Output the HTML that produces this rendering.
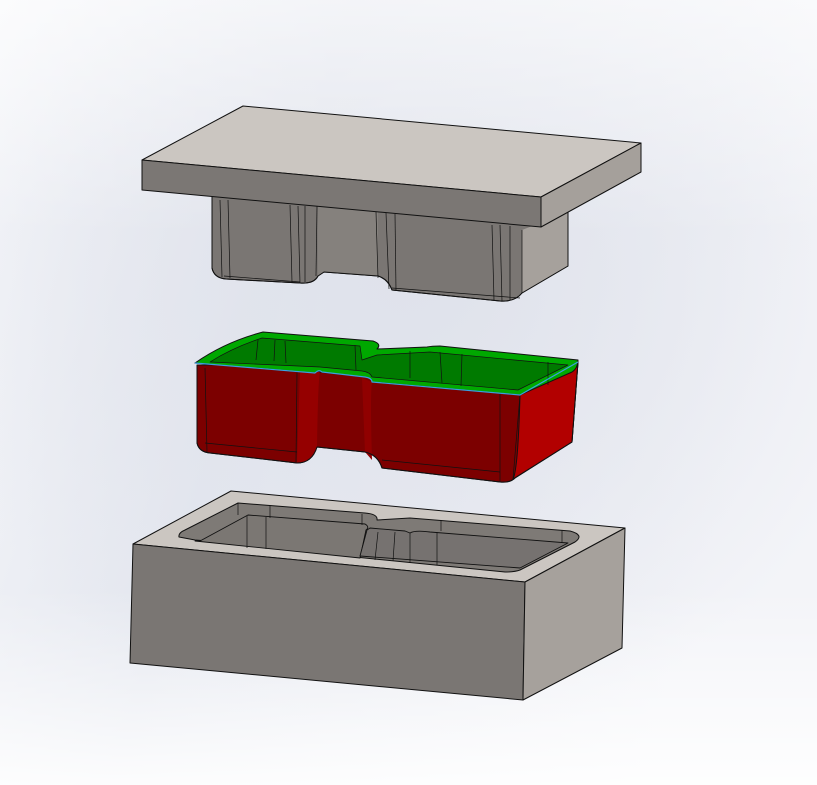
<!DOCTYPE html>
<html><head><meta charset="utf-8"><style>
html,body{margin:0;padding:0;width:817px;height:785px;overflow:hidden}
</style></head><body>
<svg width="817" height="785" viewBox="0 0 817 785" xmlns="http://www.w3.org/2000/svg">
<defs>
<linearGradient id="bg" x1="0" y1="0" x2="1" y2="0.3">
<stop offset="0" stop-color="#f6f7fa"/><stop offset="0.4" stop-color="#e4e7ef"/><stop offset="1" stop-color="#f3f4f8"/>
</linearGradient>
<radialGradient id="bg2" cx="0.5" cy="0.35" r="0.6"><stop offset="0" stop-color="#dfe2eb"/><stop offset="1" stop-color="#dfe2eb" stop-opacity="0"/></radialGradient>
<linearGradient id="bg3" x1="0" y1="0" x2="0" y2="1"><stop offset="0" stop-color="#fff" stop-opacity="0.6"/><stop offset="0.3" stop-color="#fff" stop-opacity="0"/><stop offset="0.75" stop-color="#fff" stop-opacity="0"/><stop offset="1" stop-color="#fff" stop-opacity="0.9"/></linearGradient>
</defs>
<rect width="817" height="785" fill="url(#bg)"/>
<rect width="817" height="785" fill="url(#bg2)"/>
<rect width="817" height="785" fill="url(#bg3)"/>

<g stroke="#111" stroke-width="1" stroke-linejoin="round">
<path d="M212,195 L212,268 Q214,278 226,279 L300,283 Q314,284 318,276 L324,272 L378,276 Q388,279 392,290 L500,301 Q515,302 522,293 L568,266 L568,212 Z" fill="#7a7673"/>
<path d="M522,230 L568,212 L568,266 L522,293 Z" fill="#a6a19c" stroke="none"/>
<path d="M318,205 L318,276 L324,272 L378,276 L378,210 Z" fill="#85817d" stroke="none"/>
<path d="M212,195 L212,268 Q214,278 226,279 L300,283 Q314,284 318,276 L324,272 L378,276 Q388,279 392,290 L500,301 Q515,302 522,293 L568,266 L568,212" fill="none"/>
<g stroke-width="0.7" fill="none">
<line x1="220" y1="200" x2="222" y2="277"/><line x1="228" y1="200" x2="230" y2="278"/>
<line x1="290" y1="205" x2="292" y2="282"/><line x1="298" y1="206" x2="300" y2="283"/><line x1="305" y1="206" x2="305" y2="282"/>
<line x1="317" y1="206" x2="316" y2="276"/><line x1="376" y1="212" x2="378" y2="278"/><line x1="386" y1="213" x2="389" y2="289"/>
<line x1="395" y1="214" x2="396" y2="290"/><line x1="492" y1="225" x2="494" y2="300"/><line x1="500" y1="225" x2="502" y2="301"/><line x1="510" y1="226" x2="510" y2="300"/><line x1="522" y1="230" x2="522" y2="293"/>
<line x1="224" y1="276" x2="300" y2="282"/><line x1="392" y1="288" x2="520" y2="298"/>
</g>
<polygon points="243,106 641,143 541,197 142,160" fill="#cbc6c1"/>
<polygon points="142,160 541,197 541,227 142,190" fill="#7b7774"/>
<polygon points="541,197 641,143 641,172 541,227" fill="#a5a09b"/>

<path d="M197,365 L197,443 Q199,452 210,453 L297,463 Q312,463 317,447 L365,452 Q378,455 382,468 L500,482 Q510,483 515,478 L572,442 L578,362 Z" fill="#7c0000"/>
<path d="M520,395 L578,362 L572,442 L513,479 Q518,470 520,395 Z" fill="#b20000"/>
<path d="M300,370 L320,372 Q318,380 317,447 Q312,463 297,463 Z" fill="#950000" stroke="none"/>
<path d="M362,378 L372,382 Q370,395 372,460 L365,452 Z" fill="#900000" stroke="none"/>
<path d="M197,365 L197,443 Q199,452 210,453 L297,463 Q312,463 317,447 L365,452 Q378,455 382,468 L500,482 Q510,483 515,478 L572,442 L578,362" fill="none"/>
<path d="M195,363 Q225,342 263,332 L373,341 Q382,344 377,349 L427,347 Q432,346 440,346 L578,360 Q578,368 572,372 L520,395 L372,382 Q372,378 365,377 L320,372 Q318,370 315,373 Z" fill="#00a800"/>
<path d="M210,362 Q232,348 262,338 L360,346 L362,360 L377,355 L430,352 L568,365 L518,390 L372,377 Q370,372 362,371 L320,367 Z" fill="#007a00" stroke-width="0.7"/>
<g stroke-width="0.7" fill="none">
<line x1="205" y1="368" x2="207" y2="452"/><line x1="297" y1="372" x2="296" y2="462"/>
<line x1="500" y1="394" x2="500" y2="482"/><line x1="520" y1="395" x2="513" y2="479"/>
<line x1="205" y1="443" x2="297" y2="452"/><line x1="382" y1="460" x2="500" y2="472"/>
<line x1="258" y1="340" x2="256" y2="360"/><line x1="275" y1="340" x2="274" y2="361"/><line x1="285" y1="341" x2="286" y2="363"/>
<line x1="355" y1="345" x2="356" y2="370"/><line x1="410" y1="351" x2="410" y2="378"/><line x1="440" y1="352" x2="442" y2="383"/><line x1="462" y1="354" x2="461" y2="386"/>
<line x1="548" y1="362" x2="548" y2="385"/>
</g>
<path d="M195,363 L315,373 Q319,369 322,372 L365,377 Q372,378 372,382 L520,395 L578,362" fill="none" stroke="#3aa0e0" stroke-width="1.2"/>

<polygon points="231,491 625,528 525,582 133,544" fill="#cbc6c1"/>
<polygon points="133,544 525,582 523,700 130,663" fill="#7a7673"/>
<polygon points="525,582 625,528 622,648 523,700" fill="#a6a19c"/>
<path d="M179,537 Q178,533 185,530 L238,503 L365,513 Q378,514 377,520 L410,518 L570,531 Q585,535 575,542 L520,570 Q515,572 505,572 L355,557 Q345,552 345,548 L325,547 Q318,550 310,549 L195,540 Z" fill="#7e7a76"/>
<path d="M200,541 L248,515 L365,524 Q370,527 366,530 L360,558 L195,541 Z" fill="#7b7773" stroke-width="0.9"/>
<path d="M367,530 L370,528 L405,531 L410,533 Q415,530 430,532 L568,543 L520,568 L360,556 Z" fill="#767270" stroke-width="0.9"/>
<g stroke-width="0.7" fill="none">
<line x1="247" y1="516" x2="247" y2="548"/><line x1="266" y1="517" x2="266" y2="549"/>
<line x1="378" y1="532" x2="375" y2="560"/><line x1="395" y1="532" x2="393" y2="561"/><line x1="410" y1="533" x2="410" y2="563"/><line x1="437" y1="532" x2="437" y2="565"/>
<line x1="238" y1="503" x2="238" y2="515"/><line x1="270" y1="506" x2="270" y2="518"/><line x1="362" y1="514" x2="362" y2="525"/><line x1="441" y1="520" x2="441" y2="531"/><line x1="562" y1="530" x2="562" y2="542"/>
</g>
</g>
</svg>
</body></html>
